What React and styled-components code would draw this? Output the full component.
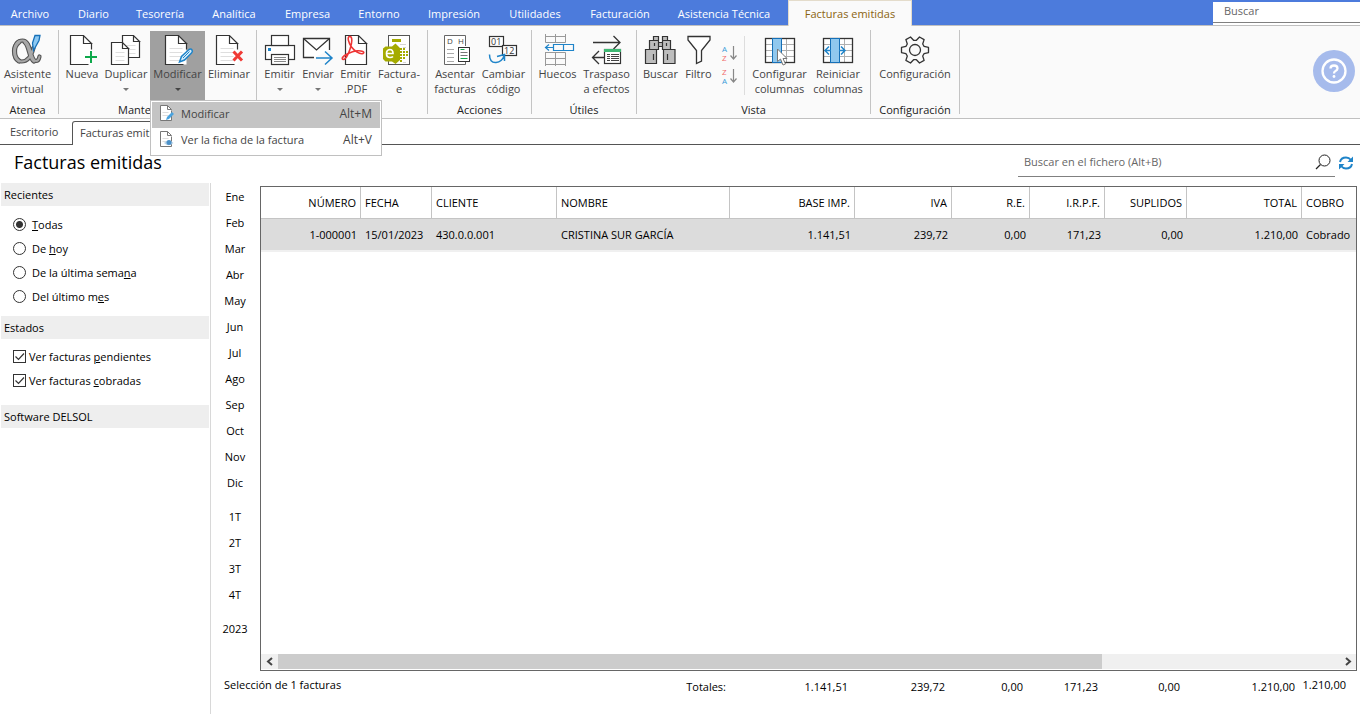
import React from "react";
import styled, { createGlobalStyle } from "styled-components";

const GlobalStyle = createGlobalStyle`
  *, *::before, *::after { box-sizing: border-box; }
  body {
    margin: 0;
    background: #fff;
    color: #000;
    font: 11px/15px "Open Sans", "Noto Sans", sans-serif;
  }
  button, input { font: inherit; color: inherit; }
  button { border: 0; padding: 0; background: none; cursor: pointer; }
`;

const Page = styled.div`
  display: flex;
  flex-direction: column;
  min-height: 100vh;
`;

/* ---------- main menu ---------- */
const MenuBar = styled.nav`
  display: flex;
  height: 26px;
  background: #4c7bdc;
  border-bottom: 1px solid #c0c0c0;
`;

const MenuTab = styled.button`
  flex: none;
  width: ${(p) => p.$w}px;
  height: ${(p) => (p.$active ? 26 : 25)}px;
  padding-top: ${(p) => (p.$active ? 0 : 2)}px;
  white-space: nowrap;
  color: ${(p) => (p.$active ? "#8a6410" : "#fff")};
  background: ${(p) => (p.$active ? "#fafafa" : "transparent")};
  border: solid ${(p) => (p.$active ? "#e4dccb" : "transparent")};
  border-width: ${(p) => (p.$active ? "1px 1px 0" : "0")};
`;

const GlobalSearch = styled.input`
  width: 147px;
  height: 21px;
  margin: 2px 0 0 auto;
  padding: 0 11px 3px;
  border: 0;
  border-bottom: 1px solid #808080;
  box-shadow: 0 2px 0 #fff;
  background: #fff;
  outline: 0;
  &::placeholder { color: #666; opacity: 1; }
`;

/* ---------- ribbon ---------- */
const Ribbon = styled.section`
  display: flex;
  height: 93px;
  padding-top: 4px;
  background: #fafafa;
  border-bottom: 1px solid #c0c0c0;
`;

const Group = styled.div`
  flex: none;
  display: flex;
  flex-direction: column;
  height: 84px;
  padding: 1px 3px 0 ${(p) => (p.$flush ? 0 : 3)}px;
  border-right: 1px solid #c4c4c4;
`;

const GroupTools = styled.div`
  display: flex;
  height: 69px;
`;

const GroupName = styled.div`
  padding-top: 2px;
  text-align: center;
  line-height: 15px;
  color: #222;
`;

const ToolSlot = styled.div`
  position: relative;
`;

const ToolButton = styled.button`
  display: flex;
  flex-direction: column;
  align-items: center;
  width: ${(p) => p.$w}px;
  height: 70px;
  padding-top: 3px;
  color: #444;
  background: ${(p) => (p.$pressed ? "#a0a0a0" : "transparent")};
  svg { flex: none; overflow: visible; }
`;

const ToolLabel = styled.span`
  white-space: pre;
`;

const Caret = styled.span`
  margin-top: 7px;
  border: solid transparent;
  border-width: 3px 3px 0;
  border-top-color: ${(p) => (p.$dark ? "#444" : "#777")};
`;

const SortColumn = styled.div`
  display: flex;
  flex-direction: column;
  gap: 6px;
  width: 28px;
  padding: 14px 0 0 6px;
  button { height: 17px; text-align: left; }
  svg { display: block; overflow: visible; }
`;

const Divider = styled.div`
  width: 1px;
  height: 59px;
  margin: 5px 5px 0 0;
  background: #ddd;
`;

const HelpButton = styled.button`
  flex: none;
  width: 42px;
  height: 42px;
  margin: 20px 5px 0 auto;
  border-radius: 50%;
  background: #a6bbec;
  svg { display: block; margin: auto; }
`;

/* ---------- drop-down ---------- */
const DropMenu = styled.div`
  position: absolute;
  z-index: 5;
  top: 69px;
  left: 0;
  width: 232px;
  padding: 1px;
  background: #fff;
  border: 1px solid #c0c0c0;
`;

const DropItem = styled.button`
  display: flex;
  align-items: center;
  width: 100%;
  height: 26px;
  padding: 0 8px 4px 7px;
  color: #444;
  background: ${(p) => (p.$active ? "#c4c4c4" : "#fff")};
  svg { flex: none; margin-right: 6px; }
  kbd { margin-left: auto; font: inherit; font-size: 12px; }
`;

/* ---------- document tabs ---------- */
const DocTabs = styled.nav`
  display: flex;
  align-items: flex-end;
  height: 26px;
  border-bottom: 1px solid #555;
`;

const DocTab = styled.button`
  height: 24px;
  width: ${(p) => p.$w}px;
  margin-bottom: -1px;
  padding: 0 8px ${(p) => (p.$active ? 3 : 4)}px ${(p) => (p.$active ? 7 : 10)}px;
  text-align: left;
  white-space: nowrap;
  color: #444;
  background: ${(p) => (p.$active ? "#fff" : "transparent")};
  border: solid ${(p) => (p.$active ? "#555" : "transparent")};
  border-width: ${(p) => (p.$active ? "1px 1px 0" : "0")};
  border-radius: 3px 3px 0 0;
`;

const TitleBar = styled.header`
  display: flex;
  height: 38px;
  padding: 0 6px 0 14px;
`;

const Title = styled.h1`
  margin: 0;
  padding-top: 5px;
  font-size: 18px;
  line-height: 24px;
  font-weight: 400;
`;

const FileSearch = styled.label`
  display: flex;
  align-items: center;
  width: 317px;
  height: 32px;
  margin-left: auto;
  padding: 2px 4px 0 6px;
  border-bottom: 1px solid #808080;
  input {
    flex: 1;
    min-width: 0;
    padding: 0;
    border: 0;
    outline: 0;
    background: none;
  }
  input::placeholder { color: #666; opacity: 1; }
`;

const RefreshButton = styled.button`
  width: 16px;
  height: 16px;
  margin: 10px 0 0 3px;
  svg { display: block; }
`;

/* ---------- body ---------- */
const Body = styled.main`
  flex: 1;
  display: flex;
`;

const Sidebar = styled.aside`
  flex: none;
  width: 211px;
  padding: 0 1px;
  border-right: 1px solid #d8d8d8;
`;

const SideSection = styled.fieldset`
  margin: 0 0 ${(p) => p.$gap}px;
  padding: 0;
  border: 0;
`;

const SideHeading = styled.legend`
  width: 100%;
  height: 23px;
  padding: 4px 3px 0;
  background: #eee;
`;

const Options = styled.div`
  display: flex;
  flex-direction: column;
  padding: ${(p) => p.$top}px 0 0 12px;
`;

const Option = styled.label`
  display: flex;
  align-items: center;
  gap: ${(p) => p.$gap}px;
  height: 24px;
`;

const Radio = styled.input.attrs({ type: "radio" })`
  appearance: none;
  width: 13px;
  height: 13px;
  margin: 0;
  border: 1px solid #333;
  border-radius: 50%;
  background: #fff;
  &:checked { background: radial-gradient(circle, #333 3px, #fff 4px); }
`;

const TickWrap = styled.span`
  display: grid;
  width: 13px;
  height: 13px;
  input, svg { grid-area: 1 / 1; }
  svg { pointer-events: none; visibility: hidden; }
  input:checked + svg { visibility: visible; }
`;

const Tick = styled.input.attrs({ type: "checkbox" })`
  appearance: none;
  width: 13px;
  height: 13px;
  margin: 0;
  border: 1px solid #333;
  background: #fff;
`;

const Periods = styled.nav`
  flex: none;
  display: flex;
  flex-direction: column;
  gap: 8px;
  width: 49px;
  padding-right: 1px;
`;

const PeriodBlock = styled.div`
  display: flex;
  flex-direction: column;
  button { height: 26px; }
`;

const Content = styled.section`
  flex: 1;
  display: flex;
  flex-direction: column;
  min-width: 0;
  padding: 3px 3px 0 0;
`;

const GridBox = styled.div`
  flex: 1;
  display: flex;
  flex-direction: column;
  border: 1px solid #666;
`;

const Table = styled.table`
  width: 100%;
  table-layout: fixed;
  border-collapse: separate;
  border-spacing: 0;
`;

const HeadCell = styled.th`
  height: 32px;
  padding: 0 4px;
  font-weight: 400;
  white-space: nowrap;
  text-align: ${(p) => p.$align};
  border-bottom: 1px solid #c4c4c4;
  border-right: 1px solid #c4c4c4;
  &:last-child { border-right: 0; }
`;

const Cell = styled.td`
  height: 33px;
  padding: 0 4px;
  white-space: nowrap;
  text-align: ${(p) => p.$align};
  background: #dcdcdc;
  border-bottom: 2px solid #f0f0f0;
`;

const ScrollTrack = styled.div`
  display: flex;
  height: 15px;
  margin: auto 0 1px;
  background: #f0f0f0;
  button { width: 17px; display: grid; place-items: center; }
  button:last-child { margin-left: auto; }
`;

const ScrollThumb = styled.div`
  flex: 0 0 calc(75% + 3px);
  background: #ccc;
`;

const Footer = styled.footer`
  flex: none;
  display: grid;
  grid-template-columns: ${(p) => p.$cols};
  height: 43px;
  padding: 8px 0 0 1px;
`;

const Selection = styled.div`
  grid-column: 1 / 4;
  margin-left: -37px;
  line-height: 12px;
`;

const Total = styled.div`
  display: flex;
  justify-content: flex-end;
  padding-right: ${(p) => p.$end}px;
  line-height: ${(p) => (p.$raised ? 12 : 16)}px;
`;

/* ---------- icons ---------- */
const INK = "#333";
const BLUE = "#1f84c9";

const Svg = ({ w = 32, h = 32, children }) => (
  <svg width={w} height={h} viewBox={`0 0 ${w} ${h}`} fill="none" aria-hidden="true">
    {children}
  </svg>
);

const Sheet = ({ x = 4.5, y = 1.5, w = 21, h = 29, open, fold = 8, lines = 0 }) => {
  const r = x + w;
  const b = y + h;
  const end = open ? `M${r} ${y + fold}V${b - 15}M${r - 3} ${b}H${x}V${y}H${r - fold}` : `M${r} ${y + fold}V${b}H${x}V${y}H${r - fold}`;
  return (
    <g>
      <path d={`M${x} ${y}H${r - fold}L${r} ${y + fold}V${b}H${x}Z`} fill="#fff" />
      {Array.from({ length: lines }, (_, i) => (
        <path key={i} d={`M${x + 4} ${b - 4 - i * 4}h${w - 8}`} stroke="#dedede" />
      ))}
      <path d={`${end}L${r} ${y + fold}H${r - fold}V${y}`} stroke={INK} strokeWidth="1.2" />
    </g>
  );
};

const alphaLine = "M22.500 14C20.500 22 16.500 27.500 10.500 27.500C5.500 27.500 3.500 22.500 3.500 17C3.500 10.500 6.500 6.500 11.500 6.500C20.500 6.500 19 27 25 27C27 27 28 25 28.500 22.500";

const AlphaIcon = (
  <g>
    <g strokeLinecap="round">
      <path d={alphaLine} stroke="#555" strokeWidth="4.200" />
      <path d="M8 8C4 11 3.500 15 3.500 17C3.500 20 4.500 25 8 27M14 8C19 12 18 24 23 27" stroke="#555" strokeWidth="5.200" />
      <path d={alphaLine} stroke="#a8a8a8" strokeWidth="2" />
      <path d="M8 8C4 11 3.500 15 3.500 17C3.500 20 4.500 25 8 27M14 8C19 12 18 24 23 27" stroke="#a8a8a8" strokeWidth="3" />
    </g>
    <path d="M24 1.500H29L28 6.500L22.500 16.500L21.500 9Z" fill="#8cc8f2" stroke="#1670b8" strokeWidth="1.300" />
  </g>
);

const PencilMark = (
  <g>
    <path d="M18.500 28L20.500 22.500L28 15.500Q30 14.500 31 16Q32 17.500 30.500 19L23.500 26Z" fill="#d5ecfb" stroke={BLUE} strokeWidth="1.500" />
    <path d="M22 24L28.500 17.500" stroke={BLUE} />
  </g>
);

const GearShape = () => {
  const pts = [];
  for (let i = 0; i < 6; i += 1) {
    [[-22, 9.8], [-11, 13.8], [11, 13.8], [22, 9.8]].forEach(([d, r]) => {
      const a = ((i * 60 + d) * Math.PI) / 180;
      pts.push(`${(16 + r * Math.cos(a)).toFixed(1)},${(16 + r * Math.sin(a)).toFixed(1)}`);
    });
  }
  return (
    <g stroke={INK} strokeWidth="1.300" strokeLinejoin="round">
      <polygon points={pts.join(" ")} />
      <circle cx="16" cy="16" r="5.500" />
    </g>
  );
};

const ColumnGrid = ({ x }) => (
  <g>
    <rect x={x} y="4.500" width="29" height="24" fill="#fff" />
    <path d={`M${x} 10.500h29M${x} 16.500h29M${x} 22.500h29M${x + 21} 4.500v24`} stroke="#b0b0b0" />
    <rect x={x} y="4.500" width="29" height="24" stroke={INK} strokeWidth="1.300" />
    <rect x={x + 7} y="4.500" width="9" height="24" fill="#90c8ee" stroke="#1670b8" />
  </g>
);

const icons = {
  alpha: AlphaIcon,
  add: (
    <g>
      <Sheet open />
      <path d="M25 17v12M19 23h12" stroke="#0ea84b" strokeWidth="2" />
    </g>
  ),
  copy: (
    <g>
      <Sheet x={12.5} w={17} h={22} fold={6} lines={3} />
      <Sheet x={1.5} y={8.5} w={17} h={22} fold={6} lines={3} />
    </g>
  ),
  edit: (
    <g>
      <Sheet lines={4} open />
      {PencilMark}
    </g>
  ),
  remove: (
    <g>
      <Sheet x={3.5} lines={4} open />
      <path d="M20.500 17.500l8.500 9M29 17.500l-8.500 9" stroke="#f03a35" strokeWidth="3" />
    </g>
  ),
  print: (
    <g stroke={INK} strokeWidth="1.200">
      <rect x="2.500" y="11.500" width="29" height="14" fill="#fff" />
      <rect x="8.500" y="1.500" width="17" height="10" fill="#fff" />
      <rect x="5" y="14" width="3" height="3" fill={BLUE} stroke="none" />
      <rect x="8.500" y="20.500" width="17" height="10" fill="#fff" />
      <path d="M11 23.500h12M11 25.500h12M11 27.500h12" stroke="#888" />
    </g>
  ),
  send: (
    <g>
      <path d="M12 23.500H1.500V4.500H27.500V16" fill="#fff" stroke={INK} strokeWidth="1.300" />
      <path d="M1.500 4.500L14.500 16L27.500 4.500" stroke={INK} strokeWidth="1.300" />
      <path d="M14 24H30M23 17.500L30 24L23 30.500" stroke={BLUE} strokeWidth="1.500" />
    </g>
  ),
  pdf: (
    <g>
      <Sheet x={6.5} />
      <path d="M10.500 2.500C8 3 9.500 9 12.500 13C15.500 17 20.500 20.500 24 19.500C26.500 18 23 16.500 18 16.800C12 17.500 5 21 3.500 23.500C2.500 26 5 26.500 7.500 23C10 19 12.800 11 12.800 6.500C12.800 3.500 12 2.200 10.500 2.500Z" stroke="#ee3535" strokeWidth="1.600" />
    </g>
  ),
  facturae: (
    <g>
      <rect x="5.500" y="1.500" width="21" height="29" fill="#fff" stroke="#555" />
      <path d="M9 6.500h9" stroke="#a5ab00" strokeWidth="3" />
      <path d="M17 10.500h6M20 13.500h3M20 28.500h3" stroke="#d5d5d5" />
      <path d="M17 15h5M17 18h8M17 21h8M17 24h5M17 27h2" stroke="#a5ab00" strokeWidth="2" strokeDasharray="2 1" />
      <path d="M12.500 9.500L17 14V26L12.500 30L9 27.500H2.500L0 25V14.500L2.500 12.500H9Z" fill="#a5ab00" />
      <path d="M3.500 19.500H10Q10 15.500 6.800 15.500Q3.500 15.800 3.500 19.500Q3.500 23.500 7 23.500Q9 23.500 10 22.500" stroke="#fff" strokeWidth="1.700" />
    </g>
  ),
  ledger: (
    <g>
      <path d="M26.500 12V1.500H5.500V30.500H26.500V28" fill="#fff" stroke="#666" />
      <path d="M8 15.500h7M8 19.500h7M8 23.500h7M8 27.500h7" stroke="#aaa" />
      <text x="8" y="10" fontSize="8" fill="#444">D</text>
      <text x="19" y="10" fontSize="8" fill="#444">H</text>
      <rect x="19.500" y="13.500" width="11" height="14" fill="#fff" stroke={INK} />
      <path d="M21.500 15.500h4M21.500 24.500h7" stroke="#0ea84b" />
      <path d="M21.500 18.500h7M21.500 21.500h7" stroke="#777" />
    </g>
  ),
  code: (
    <g>
      <rect x="2.500" y="2.500" width="14" height="10" fill="#fff" stroke={INK} strokeWidth="1.200" />
      <text x="4" y="11" fontSize="9" fill={INK}>01</text>
      <rect x="15.500" y="11.500" width="14" height="10" fill="#fff" stroke={INK} strokeWidth="1.200" />
      <text x="17" y="20" fontSize="9" fill={INK}>12</text>
      <path d="M2.500 20.500Q2.500 29 9 28.500Q15 28 17.500 21M10 22.500L17.500 20.500V27" stroke={BLUE} strokeWidth="1.500" />
    </g>
  ),
  gaps: (
    <g>
      <path d="M4.500 0V8.500H24.500V0M4.500 2.500H24.500M14.500 0V8.500" stroke="#999" />
      <path d="M4.500 18.500H24.500V32M4.500 18V32M4.500 24.500H24.500M4.500 30.500H24.500M14.500 18V32" stroke="#999" />
      <path d="M12.500 10.500H32.500V16.500H12.500ZM22.500 10.500V16.500M12 13.500H4.500M8 10.500L4.500 13.500L8 16.500" stroke={BLUE} strokeWidth="1.200" />
    </g>
  ),
  transfer: (
    <g>
      <path d="M3 8.500H30M23.500 2L30 8.500L23.500 15M14 23.500H2.500M9 17L2.500 23.500L9 30" stroke={INK} strokeWidth="1.300" />
      <rect x="14.500" y="15.500" width="16" height="14" fill="#fff" stroke={INK} strokeWidth="1.200" />
      <rect x="14" y="15" width="17" height="3" fill="#3fb873" />
      <path d="M17 20.500h3M21 20.500h8M17 22.500h3M21 22.500h8M17 24.500h3M21 24.500h8M17 26.500h3M21 26.500h8" stroke="#444" />
    </g>
  ),
  find: (
    <g fill="#bdbdbd" stroke={INK} strokeWidth="1.200">
      <path d="M9.500 2.500h5v4h-5zM18.500 2.500h5v4h-5zM5.500 6.500h9v9h-9zM18.500 6.500h8v9h-8zM14.500 8.500h4v4h-4z" />
      <path d="M1.500 15.500h11v14h-11zM19.500 15.500h11.500v14h-11.500z" />
      <path d="M9.500 20v6M23.500 20v6M10.500 9v3M22.500 9v3" />
    </g>
  ),
  filter: <path d="M6 2.500H28V6L19.500 16.500V27L14.500 29.500V16.500L6 6Z" fill="#fff" stroke={INK} strokeWidth="1.300" />,
  columns: (
    <g>
      <ColumnGrid x={2.5} />
      <path d="M14.500 15V27.500L17.500 25L20 31L22.500 30L20 24.500H24Z" fill="#fff" stroke="#777" />
    </g>
  ),
  resetColumns: (
    <g>
      <ColumnGrid x={1.5} />
      <path d="M9 16.500H3M7 12.500L3 16.500L7 20.500M17 16.500H23M19 12.500L23 16.500L19 20.500" stroke={BLUE} strokeWidth="1.500" />
    </g>
  ),
  gear: <GearShape />,
};

const SortIcon = ({ first, second, firstColor, secondColor }) => (
  <Svg w={16} h={17}>
    <text x="0" y="7" fontSize="8" fill={firstColor}>{first}</text>
    <text x="0" y="16" fontSize="8" fill={secondColor}>{second}</text>
    <path d="M11.500 1V14M8.500 10.500L11.500 14L14.500 10.500" stroke="#888" strokeWidth="1.200" />
  </Svg>
);

const MenuSheet = ({ children }) => (
  <Svg w={16} h={17}>
    <path d="M12.500 5.500V15.500H1.500V.5H8.500L12.500 4.500H8.500V.5" fill="#fff" stroke="#777" />
    <path d="M3.500 7.500h6M3.500 10.500h6" stroke="#ddd" />
    {children}
  </Svg>
);

/* ---------- data ---------- */
const menuTabs = [
  ["Archivo", 60], ["Diario", 67], ["Tesorería", 66], ["Analítica", 82], ["Empresa", 65],
  ["Entorno", 78], ["Impresión", 72], ["Utilidades", 90], ["Facturación", 80], ["Asistencia Técnica", 128],
];

const groups = [
  { name: "Atenea", flush: true, tools: [{ label: "Asistente\nvirtual", icon: "alpha", w: 55 }] },
  {
    name: "Mantenimiento",
    tools: [
      { label: "Nueva", icon: "add", w: 40 },
      { label: "Duplicar", icon: "copy", w: 48, caret: true },
      { label: "Modificar", icon: "edit", w: 55, caret: true, open: true },
      { label: "Eliminar", icon: "remove", w: 48 },
    ],
  },
  {
    name: "",
    tools: [
      { label: "Emitir", icon: "print", w: 39, caret: true },
      { label: "Enviar", icon: "send", w: 38, caret: true },
      { label: "Emitir\n.PDF", icon: "pdf", w: 37 },
      { label: "Factura-\ne", icon: "facturae", w: 50 },
    ],
  },
  {
    name: "Acciones",
    tools: [
      { label: "Asentar\nfacturas", icon: "ledger", w: 48 },
      { label: "Cambiar\ncódigo", icon: "code", w: 49 },
    ],
  },
  {
    name: "Útiles",
    tools: [
      { label: "Huecos", icon: "gaps", w: 45 },
      { label: "Traspaso\na efectos", icon: "transfer", w: 53 },
    ],
  },
  {
    name: "Vista",
    tools: [
      { label: "Buscar", icon: "find", w: 41 },
      { label: "Filtro", icon: "filter", w: 35 },
      { sort: true },
      { label: "Configurar\ncolumnas", icon: "columns", w: 59 },
      { label: "Reiniciar\ncolumnas", icon: "resetColumns", w: 58 },
    ],
  },
  { name: "Configuración", tools: [{ label: "Configuración", icon: "gear", w: 82 }] },
];

const columns = [
  { title: "NÚMERO", w: 100, align: "right", value: "1-000001" },
  { title: "FECHA", w: 71, align: "left", value: "15/01/2023" },
  { title: "CLIENTE", w: 125, align: "left", value: "430.0.0.001" },
  { title: "NOMBRE", align: "left", value: "CRISTINA SUR GARCÍA", total: "Totales:", end: 5 },
  { title: "BASE IMP.", w: 125, align: "right", value: "1.141,51", total: "1.141,51" },
  { title: "IVA", w: 97, align: "right", value: "239,72", total: "239,72" },
  { title: "R.E.", w: 78, align: "right", value: "0,00", total: "0,00" },
  { title: "I.R.P.F.", w: 75, align: "right", value: "171,23", total: "171,23" },
  { title: "SUPLIDOS", w: 82, align: "right", value: "0,00", total: "0,00" },
  { title: "TOTAL", w: 115, align: "right", value: "1.210,00", total: "1.210,00" },
  { title: "COBRO", w: 54, align: "left", value: "Cobrado", total: "1.210,00", end: 11, raised: true },
];
const gridCols = columns.map((c) => (c.w ? `${c.w}px` : "minmax(0, 1fr)")).join(" ");

const recents = [
  ["", "T", "odas"],
  ["De ", "h", "oy"],
  ["De la última sema", "n", "a"],
  ["Del último m", "e", "s"],
];
const states = [
  ["Ver facturas ", "p", "endientes"],
  ["Ver facturas ", "c", "obradas"],
];
const periods = [
  ["Ene", "Feb", "Mar", "Abr", "May", "Jun", "Jul", "Ago", "Sep", "Oct", "Nov", "Dic"],
  ["1T", "2T", "3T", "4T"],
  ["2023"],
];

const Mnemonic = ({ parts }) => (
  <span>
    {parts[0]}
    <u>{parts[1]}</u>
    {parts[2]}
  </span>
);

const Tool = ({ tool }) => {
  if (tool.sort) {
    return (
      <>
        <SortColumn>
          <button aria-label="Orden ascendente">
            <SortIcon first="A" second="Z" firstColor="#3a9ad9" secondColor="#f06a6a" />
          </button>
          <button aria-label="Orden descendente">
            <SortIcon first="Z" second="A" firstColor="#f06a6a" secondColor="#3a9ad9" />
          </button>
        </SortColumn>
        <Divider />
      </>
    );
  }
  return (
    <ToolSlot>
      <ToolButton $w={tool.w} $pressed={tool.open}>
        <Svg w={32 + (tool.w % 2)}>{icons[tool.icon]}</Svg>
        <ToolLabel>{tool.label}</ToolLabel>
        {tool.caret && <Caret $dark={tool.open} />}
      </ToolButton>
      {tool.open && (
        <DropMenu role="menu">
          <DropItem role="menuitem" $active>
            <MenuSheet>
              <path d="M7 15L8 12L13 7L15 9L10 14Z" fill="#4aa3df" />
            </MenuSheet>
            Modificar<kbd>Alt+M</kbd>
          </DropItem>
          <DropItem role="menuitem">
            <MenuSheet>
              <path d="M5 12Q9.500 6.500 14.500 12Q9.500 16.500 5 12Z" fill="#b9d3e8" />
              <circle cx="10" cy="11.500" r="2.500" fill="#4a90c8" />
            </MenuSheet>
            Ver la ficha de la factura<kbd>Alt+V</kbd>
          </DropItem>
        </DropMenu>
      )}
    </ToolSlot>
  );
};

export default function App() {
  return (
    <Page>
      <GlobalStyle />
      <MenuBar>
        {menuTabs.map(([name, w]) => (
          <MenuTab key={name} $w={w}>{name}</MenuTab>
        ))}
        <MenuTab $w={124} $active>Facturas emitidas</MenuTab>
        <GlobalSearch placeholder="Buscar" aria-label="Buscar" />
      </MenuBar>

      <Ribbon>
        {groups.map((g, i) => (
          <Group key={i} $flush={g.flush}>
            <GroupTools>
              {g.tools.map((t, j) => <Tool key={j} tool={t} />)}
            </GroupTools>
            <GroupName>{g.name}</GroupName>
          </Group>
        ))}
        <HelpButton aria-label="Ayuda">
          <Svg w={26} h={26}>
            <circle cx="13" cy="13" r="11.500" stroke="#fff" strokeWidth="2.300" />
            <path d="M9.500 10.500Q9.500 7.500 13 7.500Q16.500 7.500 16.500 10.500Q16.500 12 14.500 13Q13 13.700 13 15.500" stroke="#fff" strokeWidth="2.300" />
            <circle cx="13" cy="18.500" r="1.400" fill="#fff" />
          </Svg>
        </HelpButton>
      </Ribbon>

      <DocTabs>
        <DocTab $w={72}>Escritorio</DocTab>
        <DocTab $w={110} $active>Facturas emitidas</DocTab>
      </DocTabs>

      <TitleBar>
        <Title>Facturas emitidas</Title>
        <FileSearch>
          <input placeholder="Buscar en el fichero (Alt+B)" aria-label="Buscar en el fichero" />
          <Svg w={16} h={16}>
            <circle cx="9.500" cy="6.500" r="5.500" stroke="#222" />
            <path d="M5.500 10.500L1 15" stroke="#222" strokeWidth="1.200" />
          </Svg>
        </FileSearch>
        <RefreshButton aria-label="Actualizar">
          <Svg w={16} h={16}>
            <path d="M2 7Q3 2.500 8 2.500Q11 2.500 13 5M14 9Q13 13.500 8 13.500Q5 13.500 3 11" stroke={BLUE} strokeWidth="2" />
            <path d="M15 1.500V7H9.500ZM1 14.500V9H6.500Z" fill={BLUE} />
          </Svg>
        </RefreshButton>
      </TitleBar>

      <Body>
        <Sidebar>
          <SideSection $gap={8}>
            <SideHeading>Recientes</SideHeading>
            <Options $top={6}>
              {recents.map((r, i) => (
                <Option key={i} $gap={6}>
                  <Radio name="recientes" defaultChecked={i === 0} />
                  <Mnemonic parts={r} />
                </Option>
              ))}
            </Options>
          </SideSection>
          <SideSection $gap={13}>
            <SideHeading>Estados</SideHeading>
            <Options $top={5}>
              {states.map((s, i) => (
                <Option key={i} $gap={3}>
                  <TickWrap>
                    <Tick defaultChecked />
                    <Svg w={13} h={13}>
                      <path d="M2.500 6.500L5.500 9.500L11 3.500" stroke={INK} strokeWidth="1.200" />
                    </Svg>
                  </TickWrap>
                  <Mnemonic parts={s} />
                </Option>
              ))}
            </Options>
          </SideSection>
          <SideSection $gap={0}>
            <SideHeading>Software DELSOL</SideHeading>
          </SideSection>
        </Sidebar>

        <Periods>
          {periods.map((block, i) => (
            <PeriodBlock key={i}>
              {block.map((p) => <button key={p}>{p}</button>)}
            </PeriodBlock>
          ))}
        </Periods>

        <Content>
          <GridBox>
            <Table>
              <colgroup>
                {columns.map((c) => <col key={c.title} width={c.w} />)}
              </colgroup>
              <thead>
                <tr>
                  {columns.map((c) => <HeadCell key={c.title} $align={c.align}>{c.title}</HeadCell>)}
                </tr>
              </thead>
              <tbody>
                <tr>
                  {columns.map((c) => <Cell key={c.title} $align={c.align}>{c.value}</Cell>)}
                </tr>
              </tbody>
            </Table>
            <ScrollTrack>
              <button aria-label="Desplazar a la izquierda">
                <Svg w={8} h={9}><path d="M6 1L2 4.500L6 8" stroke="#444" strokeWidth="2" /></Svg>
              </button>
              <ScrollThumb />
              <button aria-label="Desplazar a la derecha">
                <Svg w={8} h={9}><path d="M2 1L6 4.500L2 8" stroke="#444" strokeWidth="2" /></Svg>
              </button>
            </ScrollTrack>
          </GridBox>
          <Footer $cols={gridCols}>
            <Selection>Selección de 1 facturas</Selection>
            {columns.slice(3).map((c) => (
              <Total key={c.title} $end={c.end || 8} $raised={c.raised}>{c.total}</Total>
            ))}
          </Footer>
        </Content>
      </Body>
    </Page>
  );
}
